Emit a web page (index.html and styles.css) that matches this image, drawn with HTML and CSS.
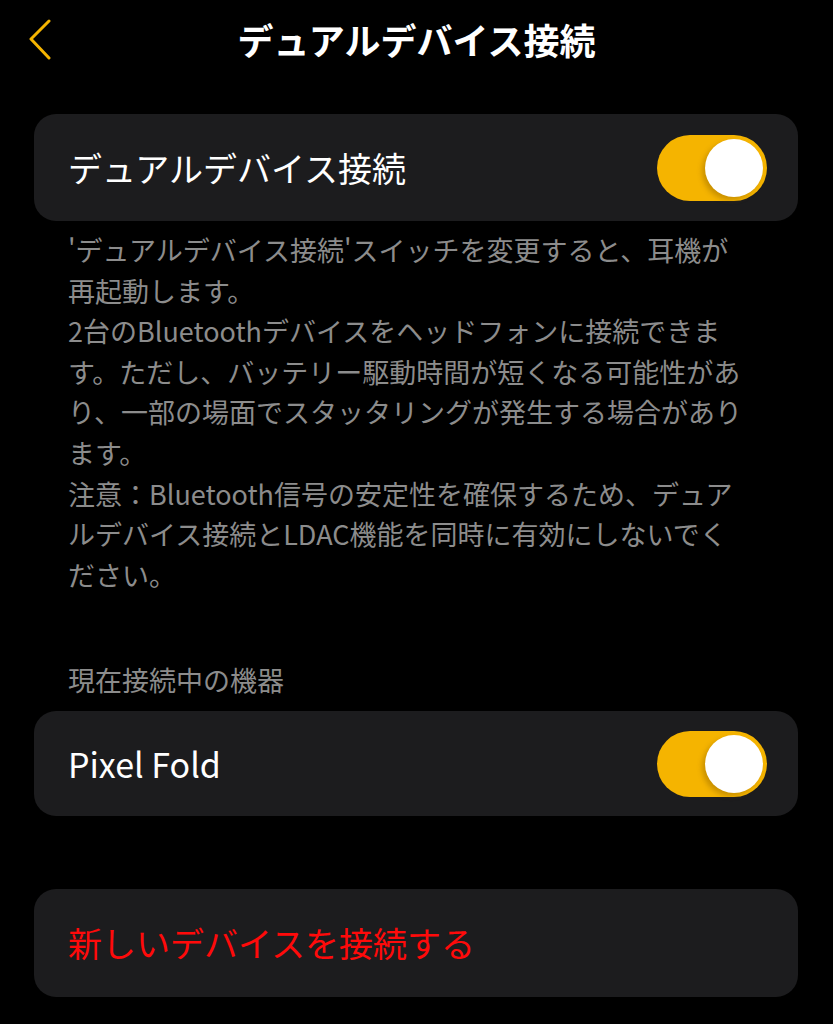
FILE: index.html
```html
<!DOCTYPE html>
<html lang="ja">
<head>
<meta charset="utf-8">
<link rel="stylesheet" href="styles.css">
</head>
<body>
<div class="screen">
  <header class="header">
    <div class="back">
      <svg width="26" height="42" viewBox="0 0 26 42"><path d="M21 3 L3 21 L21 40" fill="none" stroke="#f5b400" stroke-width="3" stroke-linecap="round" stroke-linejoin="round"/></svg>
    </div>
    <h1 class="title">デュアルデバイス接続</h1>
    <div></div>
  </header>

  <main class="content">
    <div class="card card-main">
      <span class="label">デュアルデバイス接続</span>
      <div class="toggle"><div class="knob"></div></div>
    </div>

    <p class="desc">'デュアルデバイス接続'スイッチを変更すると、耳機が<br>再起動します。<br>2台のBluetoothデバイスをヘッドフォンに接続できま<br>す。ただし、バッテリー駆動時間が短くなる可能性があ<br>り、一部の場面でスタッタリングが発生する場合があり<br>ます。<br>注意：Bluetooth信号の安定性を確保するため、デュア<br>ルデバイス接続とLDAC機能を同時に有効にしないでく<br>ださい。</p>

    <div class="section">現在接続中の機器</div>

    <div class="card card-device">
      <span class="label">Pixel Fold</span>
      <div class="toggle"><div class="knob"></div></div>
    </div>

    <div class="card card-action">
      <span class="label danger">新しいデバイスを接続する</span>
    </div>
  </main>
</div>
</body>
</html>
```

FILE: styles.css
```css
html, body {
  margin: 0;
  padding: 0;
  background: #000;
}
body {
  font-family: "Noto Sans CJK JP", "Noto Sans", sans-serif;
  color: #fff;
  width: 833px;
  height: 1024px;
  overflow: hidden;
}
.header {
  height: 78px;
  display: grid;
  grid-template-columns: 1fr auto 1fr;
  align-items: center;
}
.back {
  padding-left: 28px;
  display: flex;
  align-items: center;
}
.back svg { display: block; }
.title {
  margin: 0;
  font-size: 36px;
  font-weight: 700;
  color: #fff;
  line-height: 1;
}
.content {
  padding: 36px 35px 0 34px;
  display: flex;
  flex-direction: column;
}
.card {
  background: #1c1c1e;
  border-radius: 22px;
  display: flex;
  align-items: center;
  justify-content: space-between;
  padding: 0 31px 0 34px;
}
.card-main { height: 107px; }
.card-device { height: 105px; }
.card-action { height: 108px; margin-top: 73px; }
.label {
  font-size: 34px;
  line-height: 1;
  color: #fff;
}
.danger { color: #ff0a0a; }
.toggle {
  width: 110px;
  height: 66px;
  border-radius: 33px;
  background: #f5b400;
  display: flex;
  align-items: center;
  justify-content: flex-end;
  padding-right: 4px;
  box-sizing: border-box;
}
.knob {
  width: 58px;
  height: 58px;
  border-radius: 50%;
  background: #fff;
  box-shadow: -3px 3px 5px rgba(120, 80, 0, 0.35);
}
.desc {
  margin: 9px 0 0 0;
  padding-left: 34px;
  font-size: 27px;
  line-height: 40.6px;
  color: #8c8c8c;
  white-space: nowrap;
}
.section {
  margin-top: 65px;
  padding-left: 34px;
  font-size: 27px;
  line-height: 40px;
  color: #8c8c8c;
  margin-bottom: 11px;
}
```
